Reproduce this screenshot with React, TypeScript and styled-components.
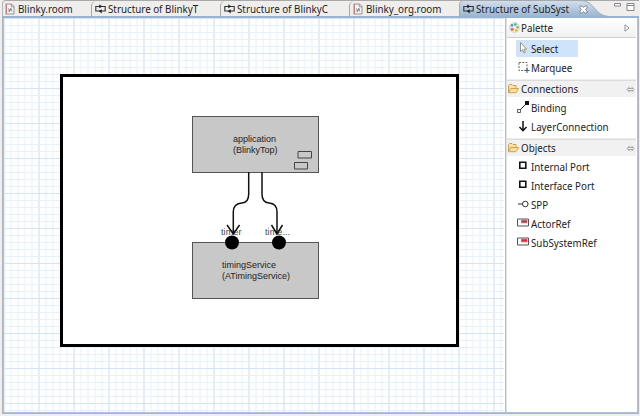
import React from "react";
import styled, { createGlobalStyle } from "styled-components";

const GlobalStyle = createGlobalStyle`
  *, *::before, *::after { box-sizing: border-box; }
  html, body { margin: 0; padding: 0; overflow: hidden; background: #f0f0f0; }
`;

const Workbench = styled.div`
  width: 640px;
  height: 416px;
  padding: 0 1px 2px 2px;
  display: flex;
  flex-direction: column;
  background: #f0efee;
  font-family: "Noto Sans", "Open Sans", sans-serif;
  font-size: 11px;
  color: #222;
  overflow: hidden;
`;

const TabStrip = styled.div`
  flex: none;
  height: 16px;
  display: flex;
  border-top: 1px solid #a9a9a9;
  border-left: 1px solid #b4b4b4;
  border-radius: 4px 0 0 0;
  background: #efeeed;
`;

const Tab = styled.div<{ $width: number; $first?: boolean }>`
  flex: none;
  width: ${(p) => p.$width}px;
  height: 16px;
  display: flex;
  align-items: center;
  padding-left: ${(p) => (p.$first ? 2 : 3)}px;
  border-left: ${(p) => (p.$first ? "0" : "1px solid #a8a8a8")};
  border-top-left-radius: 5px;
`;

const ActiveTab = styled.div`
  position: relative;
  flex: none;
  width: 153px;
  height: 16px;
  display: flex;
  align-items: center;
  padding-left: 4px;
`;

const ActiveShape = styled.svg`
  position: absolute;
  left: 0;
  top: -1px;
`;

const TabIcon = styled.svg`
  position: relative;
  flex: none;
  width: 12px;
  height: 12px;
`;

const Text = styled.span`
  position: relative;
  line-height: 16px;
  white-space: nowrap;
  transform: scaleX(0.89);
  transform-origin: left center;
`;

const TabLabel = styled(Text)`
  margin-left: 1px;
`;

const ToolLabel = styled(Text)`
  margin-bottom: 2px;
`;

const CloseIcon = styled.svg`
  position: relative;
  flex: none;
  margin-left: -2px;
`;

const WindowButtons = styled.svg`
  flex: none;
`;

const EditorFrame = styled.div`
  flex: 1;
  min-height: 0;
  display: flex;
  border: 1px solid #aeb4bd;
  border-top: 2px solid #99b4d1;
  box-shadow: inset 1px 0 #a9c4e2, inset -1px 0 #a9c4e2, inset 0 -1px #a9c4e2;
  padding: 0 2px 1px 1px;
  background: #fff;
`;

const Canvas = styled.div`
  position: relative;
  flex: none;
  width: 501px;
  border-right: 1px solid #fff;
  background-color: #fff;
  background-image:
    linear-gradient(#d3e5f5 1px, transparent 1px),
    linear-gradient(90deg, #e3eef9 2px, transparent 2px),
    linear-gradient(#e6f1fa 1px, transparent 1px),
    linear-gradient(90deg, #f3f8fd 2px, transparent 2px);
  background-size: 35px 35px, 35px 35px, 7px 7px, 7px 7px;
  background-position: 0 0, 34px 0, 0 0, 6px 0;
`;

const SystemFrame = styled.div`
  position: absolute;
  left: 56px;
  top: 56px;
  width: 399px;
  height: 273px;
  border: 3px solid #000;
  background: #fff;
`;

const Node = styled.div<{ $top: number; $indent: number }>`
  position: absolute;
  left: 188px;
  top: ${(p) => p.$top}px;
  width: 127px;
  height: 57px;
  padding: 17px 0 0 ${(p) => p.$indent}px;
  border: 1px solid #555;
  background: #c8c8c8;
  font: 9px/10.5px "Liberation Sans", Arial, sans-serif;
  color: #222;
  white-space: nowrap;
`;

const PortLabel = styled.span<{ $left: number }>`
  position: absolute;
  left: ${(p) => p.$left}px;
  top: 208px;
  font: 9px/12px "Liberation Sans", Arial, sans-serif;
  letter-spacing: 0.1px;
  color: #46464e;
`;

const Connectors = styled.svg`
  position: absolute;
  left: 0;
  top: 0;
`;

const Palette = styled.aside`
  flex: 1;
  min-width: 0;
  display: flex;
  flex-direction: column;
  border-left: 1px solid #bdbdc0;
  box-shadow: inset 1px 0 #e2e2e4;
  padding-left: 1px;
  background: #fff;
`;

const PaletteHeader = styled.header`
  height: 20px;
  flex: none;
  display: flex;
  align-items: center;
  justify-content: space-between;
  padding: 0 6px 0 2px;
  border-bottom: 1px solid #cfcfcf;
  background: linear-gradient(#fff, #f1f1f1);
`;

const DrawerHeader = styled.header`
  height: 17px;
  flex: none;
  display: flex;
  align-items: center;
  justify-content: space-between;
  padding: 0 1px 0 0;
  border-top: 1px solid #dcdcdc;
  box-shadow: 0 -1px #ededed;
  background: #f1f1f1;
`;

const Title = styled.div<{ $gap: number }>`
  display: flex;
  align-items: center;
  gap: ${(p) => p.$gap}px;
  line-height: 16px;
`;

const ToolList = styled.ul<{ $height: number }>`
  height: ${(p) => p.$height}px;
  flex: none;
  margin: 0;
  padding: 2px 0 0 9px;
  list-style: none;
`;

const Tool = styled.li<{ $selected?: boolean }>`
  width: ${(p) => (p.$selected ? "62px" : "auto")};
  height: ${(p) => (p.$selected ? "17px" : "19px")};
  margin-bottom: ${(p) => (p.$selected ? "1px" : "0")};
  display: flex;
  align-items: center;
  border-radius: 1px;
  background: ${(p) => (p.$selected ? "#cfe3fa" : "transparent")};
`;

const ToolIcon = styled.svg`
  flex: none;
  width: 14px;
  height: 14px;
  margin-right: 1px;
  overflow: visible;
`;

const RoomIcon = () => (
  <TabIcon viewBox="0 0 12 12">
    <path d="M1.500 1h5l2.500 2.500v7.500h-7.500z" fill="#f4f4f4" stroke="#88888c" strokeWidth=".9" />
    <path d="M6.300 1v2.800h2.700" fill="none" stroke="#888" strokeWidth=".8" />
    <path d="M1 .5v11" stroke="#ef6a70" />
    <path d="M3.500 5.500l1 3 1-3 1.300 3M3.500 8.500l3.500-3" fill="none" stroke="#666" strokeWidth=".7" />
  </TabIcon>
);

const StructureIcon = () => (
  <TabIcon viewBox="0 0 12 12">
    <path d="M.8 3.500h9.400v4.500H.8z" fill="none" stroke="#333" strokeWidth="1.100" />
    <path d="M4.300 1.200L7.300 3.500 4.300 5.200zM6.700 6.300L3.700 8 6.700 10.400z" fill="#222" />
  </TabIcon>
);

const FolderIcon = () => (
  <svg width="12" height="12" viewBox="0 0 12 12">
    <path d="M1.500 9.500V2.500l1-1h2.500l1 1h3v2.500" fill="#fbe3a5" stroke="#c99a4a" strokeWidth=".9" />
    <path d="M1.500 9.700l2.300-4.200h7.700L9 9.700z" fill="#ffe09a" stroke="#c99a4a" strokeWidth=".9" />
  </svg>
);

const PinIcon = () => (
  <svg width="9" height="7" viewBox="0 0 9 7">
    <path d="M3.500 .8L1 3.500 3.500 6.200M5.500 .8L8 3.500 5.500 6.200M2 2.500h5M2 4.500h5" fill="none" stroke="#929292" strokeWidth=".8" />
  </svg>
);

const PortIcon = () => (
  <ToolIcon viewBox="0 0 14 14">
    <path d="M3.800 1.300h6v6h-6z" fill="#fff" stroke="#111" strokeWidth="1.600" />
  </ToolIcon>
);

const RefIcon = ({ fill }: { fill: string }) => (
  <ToolIcon viewBox="0 0 14 14">
    <path d="M1.500 1h11v7h-11z" fill="#fafafa" stroke="#555" />
    <path d="M5.500 2.200h5.500v2.600h-5.500z" fill={fill} stroke="#c4565c" strokeWidth=".7" />
  </ToolIcon>
);

const Drawer = ({ title }: { title: string }) => (
  <DrawerHeader>
    <Title $gap={2}>
      <FolderIcon />
      <Text>{title}</Text>
    </Title>
    <PinIcon />
  </DrawerHeader>
);

export default function App() {
  return (
    <Workbench>
      <GlobalStyle />
      <TabStrip>
        <Tab $width={88} $first>
          <RoomIcon />
          <TabLabel>Blinky.room</TabLabel>
        </Tab>
        <Tab $width={129}>
          <StructureIcon />
          <TabLabel>Structure of BlinkyT</TabLabel>
        </Tab>
        <Tab $width={129}>
          <StructureIcon />
          <TabLabel>Structure of BlinkyC</TabLabel>
        </Tab>
        <Tab $width={110}>
          <RoomIcon />
          <TabLabel>Blinky_org.room</TabLabel>
        </Tab>
        <ActiveTab>
          <ActiveShape width="153" height="17" viewBox="0 0 153 17">
            <defs>
              <linearGradient id="tab" x1="0" y1="0" x2="0" y2="1">
                <stop offset="0" stopColor="#d3dfed" />
                <stop offset="1" stopColor="#99b4d1" />
              </linearGradient>
            </defs>
            <path d="M.5 17V5Q.5.5 5 .5H122C136 .5 135 16 150 16.500V17z" fill="url(#tab)" />
            <path d="M.5 17V5Q.5.5 5 .5H122C136 .5 135 16 150 16.500" fill="none" stroke="#a5a9af" />
          </ActiveShape>
          <StructureIcon />
          <TabLabel>Structure of SubSyst</TabLabel>
          <CloseIcon width="9" height="9" viewBox="0 0 9 9">
            <path d="M1 1h2l1.500 1.500L6 1h2v2L6.500 4.500 8 6v2H6L4.500 6.500 3 8H1V6l1.500-1.500L1 3z" fill="#fff" stroke="#75797f" strokeWidth=".8" />
          </CloseIcon>
        </ActiveTab>
        <WindowButtons width="24" height="14" viewBox="0 0 24 14">
          <path d="M2.500 2.500h6v2.500h-6z" fill="#fff" stroke="#85858a" />
          <path d="M15 2.500h7v7h-7zM15 4.500h7" fill="#fff" stroke="#85858a" />
        </WindowButtons>
      </TabStrip>
      <EditorFrame>
        <Canvas>
          <SystemFrame />
          <Node $top={98} $indent={40}>
            application
            <br />
            (BlinkyTop)
          </Node>
          <Node $top={224} $indent={29}>
            timingService
            <br />
            (ATimingService)
          </Node>
          <PortLabel $left={217}>timer</PortLabel>
          <PortLabel $left={261}>time...</PortLabel>
          <Connectors width="500" height="395" viewBox="4 18 500 395" fill="none" stroke="#111">
            <path d="M298 151.500h13.500v6.500H298zM294.500 162.500h13v6.500h-13z" stroke="#444" />
            <path d="M248.700 172v22Q248.700 202.500 242 203Q233.300 203.500 233.300 212V233" strokeWidth="1.500" />
            <path d="M262 172v22Q262 202.500 269 203Q277 203.500 277 212V233" strokeWidth="1.500" />
            <path d="M227 225l6.300 9 6.300-9M271.500 225l5.500 9 5.500-9" strokeWidth="1.500" />
            <g fill="#000" stroke="none">
              <circle cx="232" cy="242.500" r="7" />
              <circle cx="279" cy="242.500" r="7" />
            </g>
          </Connectors>
        </Canvas>
        <Palette>
          <PaletteHeader>
            <Title $gap={1}>
              <svg width="11" height="11" viewBox="0 0 11 11">
                <circle cx="5.500" cy="5.500" r="4.800" fill="#eef2f6" stroke="#b9c2cb" strokeWidth=".8" />
                <circle cx="3" cy="3.400" r="1.300" fill="#5a93d6" />
                <circle cx="6.300" cy="2.500" r="1.200" fill="#43a856" />
                <circle cx="8.500" cy="5.200" r="1.200" fill="#7dbb3f" />
                <circle cx="7.200" cy="8.200" r="1.300" fill="#e8b624" />
                <circle cx="3.200" cy="7.300" r="1.500" fill="#ea6a3a" />
              </svg>
              <Text>Palette</Text>
            </Title>
            <svg width="6" height="8" viewBox="0 0 6 8">
              <path d="M1 .8L5 4 1 7.200z" fill="#fff" stroke="#777" strokeWidth=".8" />
            </svg>
          </PaletteHeader>
          <ToolList $height={42}>
            <Tool $selected>
              <ToolIcon viewBox="0 0 14 14">
                <path d="M4.500 .5v9l2-1.800 1.500 3.300 1.300-.7-1.300-3.100h2.600z" fill="#fffbe8" stroke="#8d8d80" strokeWidth=".9" />
              </ToolIcon>
              <Text>Select</Text>
            </Tool>
            <Tool>
              <ToolIcon viewBox="0 0 14 14">
                <path d="M3 1.500h8v8h-8z" fill="none" stroke="#6c6248" strokeDasharray="2 1.300" />
                <path d="M8.500 9.500h5M11 7v5" stroke="#315a9c" />
              </ToolIcon>
              <Text>Marquee</Text>
            </Tool>
          </ToolList>
          <Drawer title="Connections" />
          <ToolList $height={42}>
            <Tool>
              <ToolIcon viewBox="0 0 14 14">
                <path d="M3 9L11 1" stroke="#222" />
                <path d="M9-1h4v4H9z" fill="#111" />
                <path d="M1.500 7.500h3v3h-3z" fill="#fff" stroke="#333" strokeWidth=".8" />
              </ToolIcon>
              <ToolLabel>Binding</ToolLabel>
            </Tool>
            <Tool>
              <ToolIcon viewBox="0 0 14 14">
                <path d="M7 0v9.500M3.500 6L7 9.700 10.500 6" fill="none" stroke="#111" strokeWidth="1.500" />
              </ToolIcon>
              <ToolLabel>LayerConnection</ToolLabel>
            </Tool>
          </ToolList>
          <Drawer title="Objects" />
          <ToolList $height={100}>
            <Tool>
              <PortIcon />
              <ToolLabel>Internal Port</ToolLabel>
            </Tool>
            <Tool>
              <PortIcon />
              <ToolLabel>Interface Port</ToolLabel>
            </Tool>
            <Tool>
              <ToolIcon viewBox="0 0 14 14">
                <path d="M2 5h4.500" stroke="#333" />
                <circle cx="9.300" cy="5" r="2.800" fill="#fff" stroke="#333" />
              </ToolIcon>
              <ToolLabel>SPP</ToolLabel>
            </Tool>
            <Tool>
              <RefIcon fill="#a84648" />
              <ToolLabel>ActorRef</ToolLabel>
            </Tool>
            <Tool>
              <RefIcon fill="#f32232" />
              <ToolLabel>SubSystemRef</ToolLabel>
            </Tool>
          </ToolList>
        </Palette>
      </EditorFrame>
    </Workbench>
  );
}
